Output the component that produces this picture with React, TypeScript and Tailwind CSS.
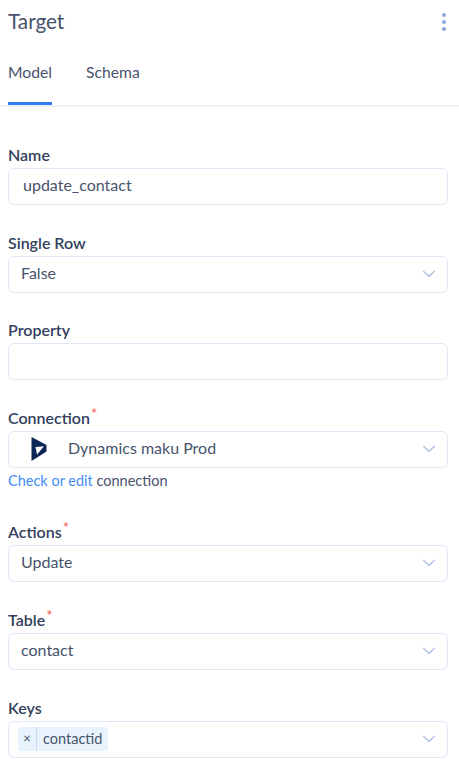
const labelClass = "block h-[21px] text-[16px] leading-[21px] font-semibold text-[#33415c]";

function Chevron() {
  return (
    <svg width="14" height="8" viewBox="0 0 14 8" fill="none" className="mb-px shrink-0">
      <path d="M1.5 1.2 7 6.4l5.5-5.2" stroke="#b4c6e4" strokeWidth="1.5" strokeLinecap="round" strokeLinejoin="round" />
    </svg>
  );
}

function Label({ text, required }: { text: string; required?: boolean }) {
  return (
    <div className={labelClass}>
      {text}
      {required && <span className="relative -top-[5px] ml-px text-[15px] font-normal text-[#f5574a]">*</span>}
    </div>
  );
}

function Box({ children, select }: { children?: React.ReactNode; select?: boolean }) {
  return (
    <div className="mt-[3px] flex h-[37px] w-[440px] items-center rounded-[6px] border-[1.5px] border-[#dfe8f6] bg-white pr-[11px]">
      <div className="flex min-w-0 flex-1 items-center pb-[3px] text-[16px] text-[#47536b]">{children}</div>
      {select && <Chevron />}
    </div>
  );
}

function DynamicsLogo() {
  return (
    <svg width="16" height="24" viewBox="0 0 16 24" className="ml-[22px] mr-[21px] mt-[3px] shrink-0">
      <path d="M0.5 0 15.5 8v6.5L0.5 24Z" fill="#0b2554" />
      <path d="M4.5 10 13 9.2 6 17.5Z" fill="#ffffff" />
    </svg>
  );
}

export default function App() {
  return (
    <div className="h-[772px] w-[459px] overflow-hidden bg-white font-['Lato',sans-serif]">
      <div className="flex h-[44px] items-center justify-between pl-2 pr-[13px]">
        <h1 className="text-[20.7px] font-normal text-[#47536b]">Target</h1>
        <div className="flex flex-col gap-[3px]">
          <span className="h-1 w-1 rounded-full bg-[#8aa6dc]" />
          <span className="h-1 w-1 rounded-full bg-[#8aa6dc]" />
          <span className="h-1 w-1 rounded-full bg-[#8aa6dc]" />
        </div>
      </div>
      <div className="flex h-[63px] gap-[34px] border-b-2 border-[#eef0f3] pl-2">
        <div className="h-[61px] border-b-[3px] border-[#2f7bf5] pt-[16px] text-[15.7px] leading-[24px] text-[#47536b]">Model</div>
        <div className="pt-[16px] text-[15.7px] leading-[24px] text-[#47536b]">Schema</div>
      </div>
      <div className="flex flex-col gap-[26.6px] pl-2 pt-[37px]">
        <div>
          <Label text="Name" />
          <Box><span className="pl-[14px]">update_contact</span></Box>
        </div>
        <div>
          <Label text="Single Row" />
          <Box select><span className="pl-[12px]">False</span></Box>
        </div>
        <div>
          <Label text="Property" />
          <Box />
        </div>
        <div>
          <Label text="Connection" required />
          <Box select>
            <DynamicsLogo />
            <span>Dynamics maku Prod</span>
          </Box>
          <div className="mt-[3px] h-[24px] text-[14.5px] leading-[20px] text-[#47536b]">
            <span className="text-[#3f8cf7]">Check or edit</span> connection
          </div>
        </div>
        <div>
          <Label text="Actions" required />
          <Box select><span className="pl-[12px]">Update</span></Box>
        </div>
        <div>
          <Label text="Table" required />
          <Box select><span className="pl-[12px]">contact</span></Box>
        </div>
        <div>
          <Label text="Keys" />
          <Box select>
            <div className="ml-[9px] mt-[3px] flex h-[24px] items-stretch rounded-[3px] bg-[#e9f3fd] text-[14.5px] text-[#47536b]">
              <span className="flex w-[19px] items-center justify-center border-r border-[#c4def9] text-[13px]">×</span>
              <span className="flex items-center px-[6px]">contactid</span>
            </div>
          </Box>
        </div>
      </div>
    </div>
  );
}
